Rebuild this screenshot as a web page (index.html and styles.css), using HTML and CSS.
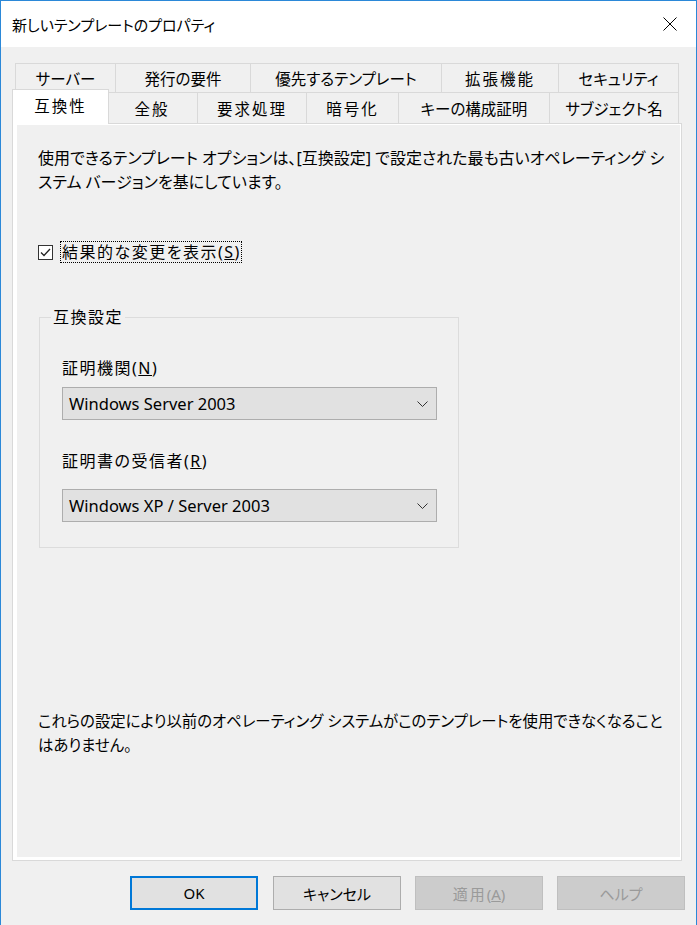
FILE: index.html
```html
<!DOCTYPE html>
<html lang="ja">
<head>
  <meta charset="UTF-8" />
  <title>新しいテンプレートのプロパティ</title>
  <link rel="stylesheet" href="styles.css">
</head>
<body>

  <div class="window">
    <div class="titlebar">
      <span class="title">新しいテンプレートのプロパティ</span>
      <svg class="close" width="14" height="14" viewBox="0 0 14 14">
        <path d="M0.5 0.5L13.5 13.5M13.5 0.5L0.5 13.5" stroke="#000" stroke-width="1" fill="none"/>
      </svg>
    </div>

    <div class="dialog">
      <div class="tabs">
        <div class="tab-row row-back">
          <div class="tab">サーバー</div>
          <div class="tab">発行の要件</div>
          <div class="tab">優先するテンプレート</div>
          <div class="tab wide">拡張機能</div>
          <div class="tab">セキュリティ</div>
        </div>
        <div class="tab-row row-front">
          <div class="tab active wide">互換性</div>
          <div class="tab wide">全般</div>
          <div class="tab wide">要求処理</div>
          <div class="tab wide">暗号化</div>
          <div class="tab">キーの構成証明</div>
          <div class="tab">サブジェクト名</div>
        </div>
      </div>

      <div class="tab-panel">
        <div class="page">
          <p class="intro">使用できるテンプレート オプションは、[互換設定] で設定された最も古いオペレーティング シ<br>ステム バージョンを基にしています。</p>

          <label class="check-row">
            <span class="checkbox">
              <svg width="13" height="13" viewBox="0 0 13 13">
                <polyline points="2,6.5 5,9.5 11,3" fill="none" stroke="#222" stroke-width="1.3"/>
              </svg>
            </span>
            <span class="focus-label">結果的な変更を表示(<u>S</u>)</span>
          </label>

          <fieldset class="group">
            <legend>互換設定</legend>
            <div class="field-label first">証明機関(<u>N</u>)</div>
            <div class="combo combo-ca">
              <span>Windows Server 2003</span>
              <svg width="11" height="6" viewBox="0 0 11 6"><polyline points="0.5,0.5 5.5,5.5 10.5,0.5" fill="none" stroke="#333" stroke-width="1"/></svg>
            </div>
            <div class="field-label">証明書の受信者(<u>R</u>)</div>
            <div class="combo combo-recipient">
              <span>Windows XP / Server 2003</span>
              <svg width="11" height="6" viewBox="0 0 11 6"><polyline points="0.5,0.5 5.5,5.5 10.5,0.5" fill="none" stroke="#333" stroke-width="1"/></svg>
            </div>
          </fieldset>

          <p class="note">これらの設定により以前のオペレーティング システムがこのテンプレートを使用できなくなること<br>はありません。</p>
        </div>
      </div>

      <div class="buttons">
        <button class="btn default">OK</button>
        <button class="btn">キャンセル</button>
        <button class="btn" disabled><span class="wide">適用</span>(<u>A</u>)</button>
        <button class="btn" disabled>ヘルプ</button>
      </div>
    </div>
  </div>

</body>
</html>
```

FILE: styles.css
```css
html, body {
  margin: 0;
  padding: 0;
  background: #f0f0f0;
  font-family: "Noto Sans", "Noto Sans CJK JP", sans-serif;
  font-feature-settings: "palt";
  font-size: 15px;
  color: #000;
}

/* window frame */
.window {
  width: 697px;
  height: 925px;
  box-sizing: border-box;
  border: 1px solid #2b88d8;
  border-bottom: none;
  background: #f0f0f0;
}

.titlebar {
  height: 46px;
  background: #fff;
  display: flex;
  align-items: center;
  justify-content: space-between;
  padding: 0 19px 0 11px;
}
.title { font-size: 15px; }

.dialog {
  padding: 16px 11px 0 11px;
}

/* kanji labels run wider than kana ones */
.wide { letter-spacing: 2px; }

/* tabs, two rows */
.tabs { margin-right: 3px; }
.tab-row { display: flex; }
.row-back { margin-left: 3px; height: 29px; }
.row-front { margin-left: 2px; height: 31px; }

.tab {
  flex: none;
  box-sizing: border-box;
  border: 1px solid #d9d9d9;
  border-bottom: none;
  background: #f0f0f0;
  white-space: nowrap;
  display: flex;
  align-items: center;
  justify-content: center;
  font-size: 15.5px;
}
.tab + .tab { margin-left: -1px; }

.row-back .tab:nth-child(1) { width: 101px; }
.row-back .tab:nth-child(2) { width: 136px; }
.row-back .tab:nth-child(3) { width: 192px; }
.row-back .tab:nth-child(4) { width: 118px; }
.row-back .tab:nth-child(5) { width: 121px; }

.row-front .tab:nth-child(1) { width: 97px; }
.row-front .tab:nth-child(2) { width: 92px; }
.row-front .tab:nth-child(3) { width: 110px; }
.row-front .tab:nth-child(4) { width: 93px; }
.row-front .tab:nth-child(5) { width: 152px; }
.row-front .tab:nth-child(6) { width: 130px; }

.tab.active {
  position: relative;
  z-index: 1;
  background: #fff;
  margin: -3px -2px -1px -2px;
  height: 35px;
  padding-bottom: 3px;
}

/* tab body */
.tab-panel {
  margin-right: 3px;
  height: 738px;
  box-sizing: border-box;
  border: 1px solid #d9d9d9;
  background: #fff;
  padding: 1px 1px 3px 4px;
}
.page {
  height: 100%;
  box-sizing: border-box;
  background: #f0f0f0;
  padding: 21px 10px 0 21px;
}

.intro, .note {
  margin: 0;
  line-height: 24px;
  white-space: nowrap;
}
.intro { font-size: 16px; }
.note { font-size: 15.4px; }

.check-row {
  margin-top: 47px;
  height: 22px;
  display: flex;
  align-items: center;
}
.checkbox {
  width: 15px;
  height: 15px;
  box-sizing: border-box;
  border: 1px solid #333;
  background: #fff;
  display: flex;
  align-items: center;
  justify-content: center;
  margin-right: 7px;
}
.focus-label {
  border: 1px dotted #000;
  height: 22px;
  box-sizing: border-box;
  line-height: 20px;
  padding: 0 0 0 1px;
  font-size: 16px;
  letter-spacing: 1.5px;
}

/* group box */
.group {
  margin: 44px 0 0 1px;
  width: 420px;
  box-sizing: border-box;
  border: 1px solid #dcdcdc;
  padding: 0 20px 25px 22px;
}
.group legend {
  line-height: 20px;
  padding: 0 2px;
  margin-left: -11px;
  font-size: 16px;
  letter-spacing: 1.5px;
}
.field-label {
  line-height: 24px;
  margin-top: 29px;
  font-size: 16px;
  letter-spacing: 1.5px;
}
.combo {
  width: 375px;
  height: 33px;
  box-sizing: border-box;
  border: 1px solid #adadad;
  background: #e1e1e1;
  display: flex;
  align-items: center;
  justify-content: space-between;
  padding: 0 8px 0 6px;
  font-size: 16.5px;
}
.combo-ca { margin-top: 7px; }
.combo-recipient { margin-top: 16px; }

.note { margin-top: 162px; }

/* dialog buttons */
.buttons {
  margin-top: 15px;
  display: flex;
  justify-content: flex-end;
  gap: 14px;
}
.btn {
  width: 128px;
  height: 34px;
  box-sizing: border-box;
  border: 1px solid #adadad;
  background: #e1e1e1;
  font: inherit;
  color: #000;
  padding: 0;
}
.btn.default {
  border: 2px solid #0078d7;
  margin-right: 1px;
}
.btn:disabled {
  background: #cccccc;
  border-color: #bfbfbf;
  color: #9a9a9a;
}
```
